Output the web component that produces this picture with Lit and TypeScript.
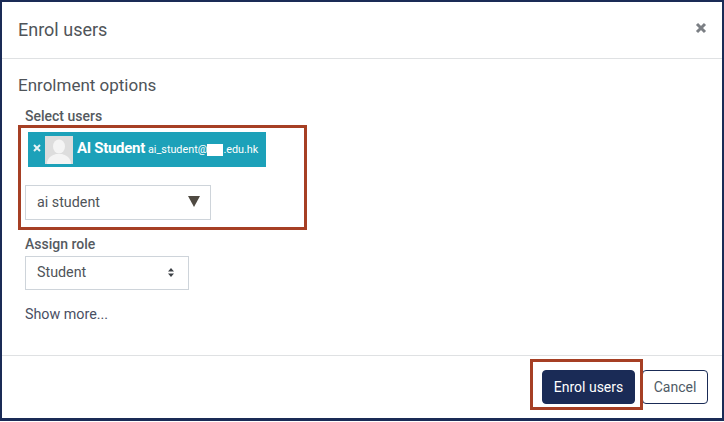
import { LitElement, html, css } from "lit";
import { customElement } from "lit/decorators.js";

@customElement("app-root")
export class AppRoot extends LitElement {
  static styles = css`
    :host { display: block; width: 724px; height: 422px; background: #fff; font-family: Roboto, "Liberation Sans", sans-serif; color: #4f5459; }
    * { box-sizing: border-box; }
    .modal { position: relative; width: 724px; height: 421px; border: 2px solid #1a2b56; border-bottom-width: 3px; background: #fff; display: flex; flex-direction: column; }
    .header { height: 57px; flex: none; border-bottom: 1px solid #dfe1e3; display: flex; align-items: center; justify-content: space-between; padding: 0 15px 0 16px; }
    .title { font-size: 18px; line-height: 24px; }
    .close { width: 12px; height: 12px; display: block; margin-bottom: 5px; }
    .body { flex: 1; padding: 16px 16px 0 16px; display: flex; flex-direction: column; align-items: flex-start; }
    .section { font-size: 17px; line-height: 20px; margin-bottom: 12px; }
    .field { margin-left: 7px; display: flex; flex-direction: column; align-items: flex-start; }
    .label { font-size: 14px; line-height: 18px; font-weight: 500; color: #555a5f; }
    .chip { margin: 7px 0 0 3px; width: 238px; height: 35px; background: #1ca1b9; color: #fff; display: flex; align-items: center; padding-left: 5px; }
    .chip-x { width: 8px; height: 8px; margin: 0 4px 3px 0; display: block; flex: none; }
    .avatar { width: 28px; height: 28px; display: block; flex: none; margin-right: 4px; }
    .name { font-size: 15px; font-weight: 700; letter-spacing: -0.3px; margin: 0 3px 3px 0; white-space: nowrap; }
    .email { font-size: 10.8px; white-space: nowrap; display: flex; align-items: center; }
    .mask { display: inline-block; width: 16px; height: 12px; background: #fff; }
    .combo { margin-top: 18px; width: 186px; height: 35px; border: 1px solid #ced4da; display: flex; align-items: center; justify-content: space-between; padding: 0 10px 2px 11px; font-size: 14.3px; }
    .tri { width: 12px; height: 11px; display: block; margin-bottom: 1px; }
    .role-label { margin-top: 15px; }
    .select { margin-top: 3px; width: 164px; height: 34px; border: 1px solid #ced4da; display: flex; align-items: center; justify-content: space-between; padding: 0 14px 2px 11px; font-size: 14.3px; }
    .carets { width: 6px; height: 9px; display: block; }
    .more { margin-top: 14px; font-size: 14.3px; line-height: 20px; color: #4a4f63; }
    .footer { height: 63px; flex: none; border-top: 1px solid #dfe1e3; display: flex; justify-content: flex-end; align-items: flex-start; gap: 7px; padding: 14px 14px 0 0; }
    .btn { height: 34px; border-radius: 4px; font: inherit; font-size: 14px; display: flex; align-items: center; justify-content: center; }
    .primary { width: 93px; background: #1a2b56; color: #fff; border: 1px solid #1a2b56; }
    .secondary { width: 66px; background: #fff; color: #4f5b66; border: 1px solid #1a2b56; }
    .mark { position: absolute; border: 3px solid #a63f24; pointer-events: none; }
    .mark-users { left: 16px; top: 123px; width: 289px; height: 105px; }
    .mark-btn { left: 528px; top: 357px; width: 113px; height: 51px; }
  `;

  render() {
    return html`
      <div class="modal">
        <div class="header">
          <div class="title">Enrol users</div>
          <svg class="close" viewBox="0 0 12 12"><path d="M2 2 L10 10 M10 2 L2 10" stroke="#7b7f84" stroke-width="3" /></svg>
        </div>
        <div class="body">
          <div class="section">Enrolment options</div>
          <div class="field">
            <div class="label">Select users</div>
            <div class="chip">
              <svg class="chip-x" viewBox="0 0 8 8"><path d="M1 1 L7 7 M7 1 L1 7" stroke="#e8f4f6" stroke-width="2" /></svg>
              <svg class="avatar" viewBox="0 0 28 28">
                <rect width="28" height="28" fill="#dddddd" />
                <ellipse cx="14" cy="10.5" rx="6" ry="7" fill="#f4f4f4" />
                <path d="M2 28 C2 21 8 19 11 18 L17 18 C20 19 26 21 26 28 Z" fill="#f4f4f4" />
              </svg>
              <span class="name">AI Student</span>
              <span class="email">ai_student@<span class="mask"></span>.edu.hk</span>
            </div>
            <div class="combo">
              <span>ai student</span>
              <svg class="tri" viewBox="0 0 12 11"><path d="M0 0 H12 L6 11 Z" fill="#4f4a42" /></svg>
            </div>
            <div class="label role-label">Assign role</div>
            <div class="select">
              <span>Student</span>
              <svg class="carets" viewBox="0 0 6 9"><path d="M3 0 L6 3.5 H0 Z M3 9 L0 5.5 H6 Z" fill="#3d4146" /></svg>
            </div>
            <div class="more">Show more...</div>
          </div>
        </div>
        <div class="footer">
          <div class="btn primary">Enrol users</div>
          <div class="btn secondary">Cancel</div>
        </div>
        <div class="mark mark-users"></div>
        <div class="mark mark-btn"></div>
      </div>
    `;
  }
}
